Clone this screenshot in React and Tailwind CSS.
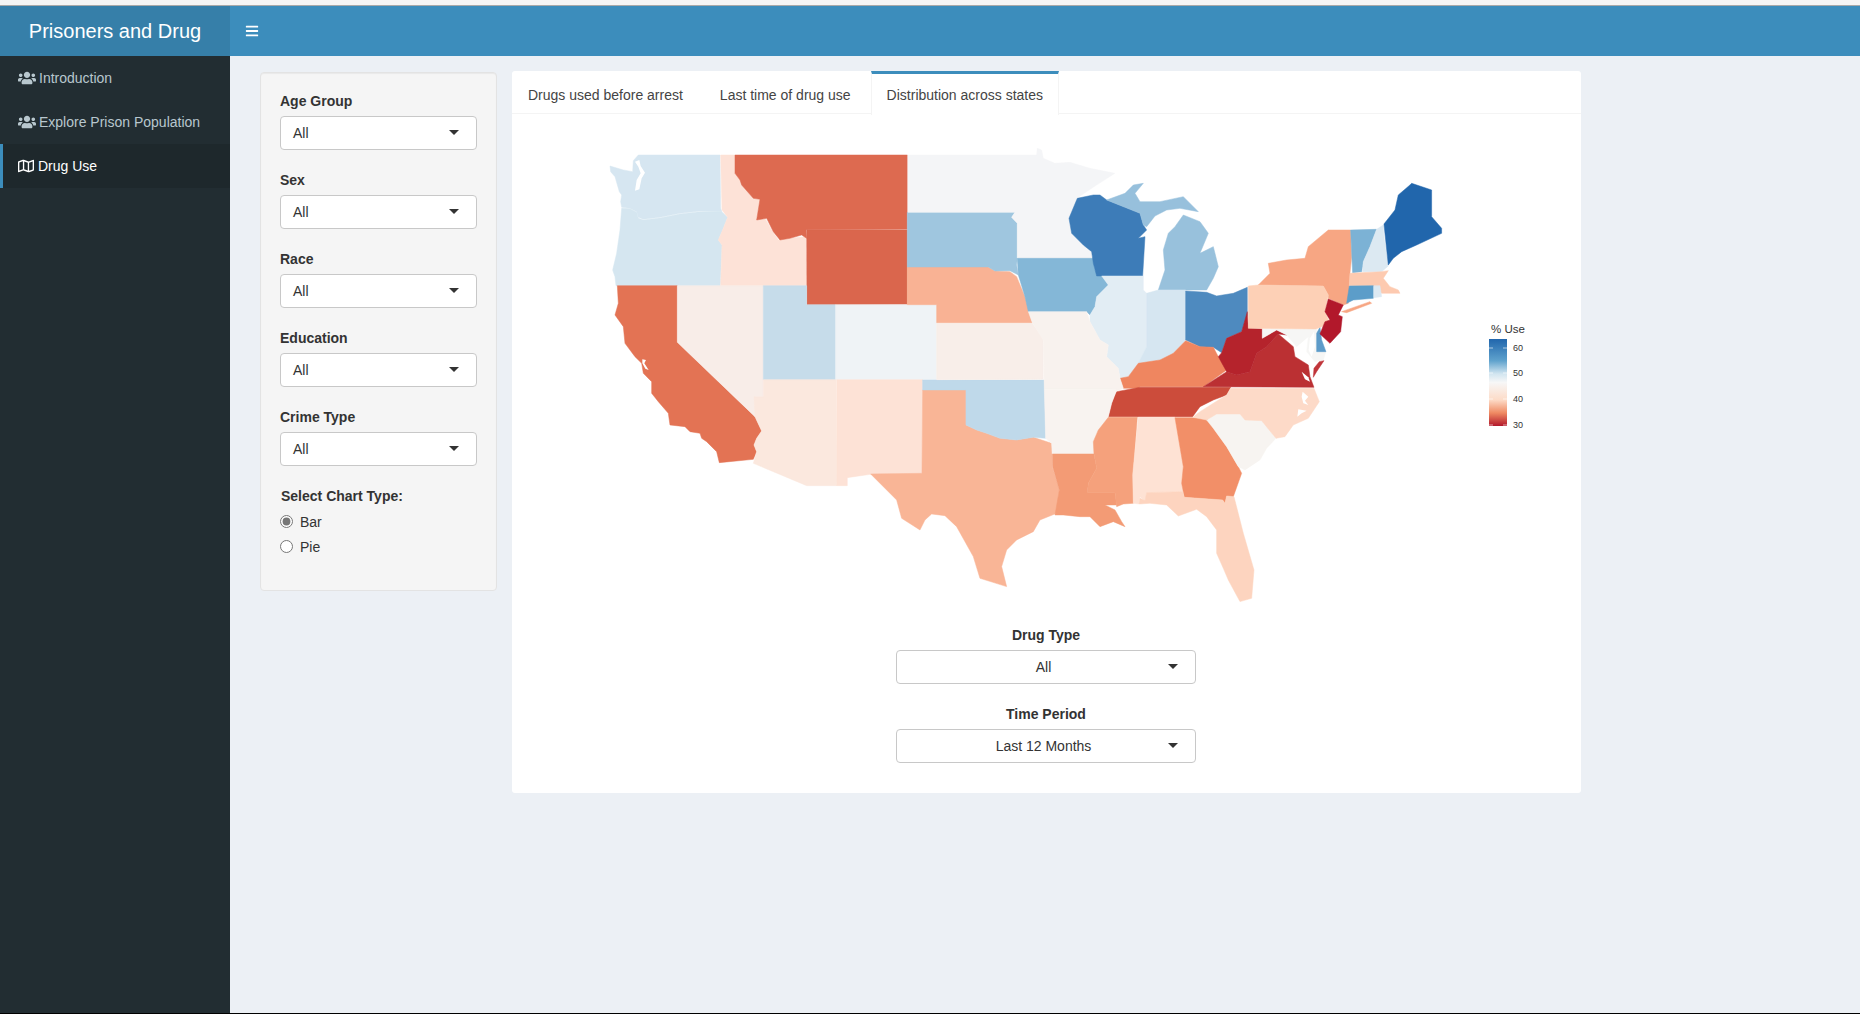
import React, { useState } from "react";
import { FaBars, FaRegMap, FaUsers } from "react-icons/fa";

const font = "font-['Liberation_Sans',Arial,sans-serif]";

// state outlines, in 3x pixels of the plot. west group starts at (590,130), east group at (1000,130)
const westStates = [
  ["#d6e6f1", "145,75 390,75 392,235 396,245 330,243 270,250 210,262 160,268 145,262 140,245 120,235 95,232 92,215 95,195 88,185 75,140 62,125 60,108 100,120 128,125 130,92"],
  ["#d5e6f0", "95,235 120,236 140,247 145,265 160,270 210,264 270,252 330,245 395,245 413,262 400,295 385,330 396,345 391,467 78,467 75,440 68,420 80,370 90,300"],
  ["#fde2d7", "392,75 435,75 435,130 450,150 455,165 490,205 510,208 500,265 525,265 545,300 565,330 600,325 630,322 648,320 650,467 392,467 396,345 385,330 400,295 413,262 396,240"],
  ["#dd6a50", "435,75 952,75 952,297 648,299 650,325 635,315 600,325 570,330 550,305 530,265 500,270 510,208 490,205 455,165 450,150 435,130"],
  ["#da664d", "650,299 952,299 952,523 651,524"],
  ["#e37354", "82,467 262,467 262,637 495,860 515,903 500,925 492,945 500,965 490,988 388,998 380,965 350,935 335,925 330,910 300,905 285,890 240,885 235,850 205,815 185,790 185,755 160,730 155,700 135,680 105,640 100,590 75,555 85,520"],
  ["#f8ede8", "262,467 520,467 520,800 495,800 495,860 262,637"],
  ["#c6dcea", "520,467 650,467 650,524 737,524 737,749 520,749"],
  ["#eff3f6", "737,524 1040,524 1040,749 737,749"],
  ["#fbe8de", "520,749 738,749 740,1067 650,1067 490,1000 500,965 492,945 500,925 515,903 495,860 492,800 520,800"],
  ["#fde2d6", "740,749 998,749 996,1030 842,1033 772,1043 772,1067 740,1067"],
  ["#f9b596", "998,780 1128,780 1128,885 1160,900 1190,910 1230,925 1280,930 1330,922 1385,940 1387,1010 1408,1080 1400,1150 1350,1170 1330,1205 1280,1230 1250,1260 1235,1310 1250,1370 1170,1345 1150,1280 1100,1190 1065,1157 1025,1152 1005,1170 990,1200 935,1165 920,1110 890,1080 842,1032 996,1030"],
  ["#bfd9ea", "998,750 1363,750 1367,925 1330,922 1280,930 1230,925 1190,910 1160,900 1128,885 1128,780 998,780"],
  ["#f8eee9", "1040,580 1327,580 1360,625 1360,748 1040,749"],
  ["#f9b294", "952,411 1195,411 1215,423 1260,425 1280,440 1305,500 1327,578 1040,578 1040,524 952,524"],
  ["#9fc6df", "952,247 1275,247 1265,262 1282,280 1282,385 1280,405 1285,435 1260,422 1215,423 1195,411 952,411"],
  ["#f4f5f7", "954,75 1340,75 1342,55 1355,60 1360,85 1395,100 1440,97 1500,115 1575,130 1520,165 1475,195 1462,205 1437,265 1445,310 1480,345 1505,365 1510,385 1282,385 1282,280 1265,262 1275,247 954,247"],
];

const eastStates = [
  ["#84b7d7", "52,385 280,385 285,420 305,435 325,465 290,500 285,530 270,555 260,545 85,545 75,500 55,435"],
  ["#3d7cb8", "232,205 280,195 300,195 320,210 420,250 430,285 440,300 415,325 435,320 428,438 290,438 280,400 275,365 250,345 215,310 207,265"],
  ["#97c0dc", "320,210 375,190 400,165 430,160 405,190 420,215 480,215 550,200 595,245 540,235 500,240 465,258 440,290 430,285 420,250"],
  ["#98c1dc", "475,480 495,420 490,360 505,310 525,290 550,255 600,275 625,310 600,370 640,350 655,410 640,445 620,480"],
  ["#e2edf4", "290,500 325,465 305,438 430,438 430,480 440,490 440,650 415,700 385,740 360,745 355,715 320,680 325,645 300,630 270,575 270,555 285,530"],
  ["#d6e6f1", "440,490 475,480 557,480 557,630 520,670 480,690 415,700 440,650"],
  ["#4e8abf", "557,483 620,487 650,498 700,490 742,472 742,555 725,605 680,625 665,668 640,652 600,650 557,630"],
  ["#ef8660", "360,745 385,740 415,700 480,690 520,670 557,632 600,650 640,652 655,680 680,720 610,770 420,770 415,775 370,775"],
  ["#cc4c3b", "350,785 420,772 692,772 680,795 640,810 600,830 578,860 325,860 335,820"],
  ["#f8f2ee", "85,545 260,545 270,575 300,630 325,645 320,680 355,715 360,745 370,775 345,785 335,778 133,778 130,630 97,578"],
  ["#f8f3f0", "133,778 350,778 335,820 325,860 300,890 285,920 282,972 157,972 155,940 137,925"],
  ["#f39b75", "157,972 282,972 290,1015 265,1060 262,1087 345,1087 350,1125 315,1125 345,1140 365,1175 375,1190 340,1175 300,1190 270,1160 240,1160 190,1155 165,1155 178,1080 158,1010"],
  ["#f5a17c", "325,862 412,862 400,1020 400,1120 370,1122 350,1130 345,1087 262,1087 265,1060 290,1015 282,972 280,935 295,900"],
  ["#fee2d4", "415,862 525,862 550,1010 545,1060 548,1085 440,1088 435,1115 420,1100 418,1122 400,1120 398,1035"],
  ["#f28f68", "525,863 620,863 640,895 680,950 715,1010 725,1030 700,1100 680,1098 675,1120 668,1110 553,1102 545,1060 550,1010"],
  ["#fdd4bf", "440,1088 548,1085 553,1102 668,1110 675,1120 680,1098 702,1100 730,1210 762,1320 755,1405 720,1415 685,1350 670,1315 650,1270 650,1200 620,1160 590,1138 535,1158 500,1125 450,1120 418,1122 420,1105 435,1112"],
  ["#f7f4f1", "620,870 650,852 720,852 735,870 785,872 828,925 800,955 780,990 735,1020 715,1010 680,950 640,895"],
  ["#fddac8", "692,775 942,775 958,815 925,865 880,885 855,920 828,925 785,872 735,870 720,852 650,852 620,870 578,862 600,845 640,820 680,795"],
  ["#bb3033", "610,770 680,725 710,735 750,725 770,670 800,650 835,612 880,650 885,680 925,705 930,740 942,772"],
  ["#b5232c", "665,668 680,625 725,605 742,545 745,595 787,597 787,625 830,600 860,615 835,612 800,650 770,670 750,725 710,735 680,725 655,680"],
  ["#f6f6f5", "787,597 950,597 950,665 978,665 970,690 945,695 920,665 925,620 890,650 860,615 830,600 787,625"],
  ["#5d9bc9", "960,592 950,610 950,665 978,665 965,630"],
  ["#c0353a", "958,695 972,692 950,725 940,742 942,715"],
  ["#f7a683", "775,465 810,430 805,400 860,390 915,385 925,350 985,300 1052,300 1055,380 1050,430 1045,520 1030,525 985,505 985,495 970,468"],
  ["#f7a683", "1025,545 1110,515 1115,520 1040,548"],
  ["#fdd0b6", "745,468 775,465 970,468 985,495 975,545 990,580 948,597 745,595"],
  ["#b2182b", "985,507 1030,525 1015,555 1027,560 1022,605 990,640 960,612 975,575 990,570 975,545"],
  ["#7cb2d5", "1052,300 1130,298 1110,350 1090,395 1085,425 1058,428"],
  ["#dce9f2", "1130,298 1150,285 1152,320 1165,408 1145,425 1088,425 1090,395 1110,350"],
  ["#2166ac", "1152,282 1185,240 1195,195 1230,165 1235,160 1295,180 1295,260 1325,295 1325,310 1250,345 1205,365 1180,385 1165,405"],
  ["#fdcab0", "1050,430 1145,425 1165,422 1150,445 1170,470 1195,480 1200,490 1170,490 1145,490 1120,467 1048,467"],
  ["#5c9dc9", "1048,468 1120,467 1120,505 1060,510 1040,520"],
  ["#dce9f2", "1122,467 1140,467 1145,500 1122,503"],
];

// bays and sounds cut out of the land
const westWater = [
  "135,95 148,90 152,108 165,128 155,145 148,178 135,182 140,150 152,130 145,110",
  "157,688 168,690 163,700 176,720 166,716 157,700",
];
const eastWater = [
  "908,785 925,800 915,812 925,825 910,820 905,800",
  "895,838 920,842 905,850 892,860",
  "905,725 925,742 930,755 915,748",
  "930,625 942,605 945,650 935,680 926,660",
];

function StateGroup({ x, states, water }) {
  return (
    <g transform={`translate(${x} 130) scale(0.3333)`}>
      {states.map(([fill, points], i) => (
        <polygon key={i} points={points} fill={fill} stroke={fill} strokeWidth="1.5" strokeLinejoin="round" />
      ))}
      {water.map((points, i) => (
        <polygon key={i} points={points} fill="#ffffff" />
      ))}
    </g>
  );
}

function UsMap() {
  return (
    <svg viewBox="512 114 1069 511" className="block h-[511px] w-[1069px]">
      <defs>
        <linearGradient id="useScale" x1="0" y1="0" x2="0" y2="1">
          <stop offset="0" stopColor="#2166ac" />
          <stop offset="0.25" stopColor="#5fa2cd" />
          <stop offset="0.4" stopColor="#d1e5f0" />
          <stop offset="0.5" stopColor="#f7f7f7" />
          <stop offset="0.7" stopColor="#fddbc7" />
          <stop offset="0.85" stopColor="#ef8a62" />
          <stop offset="1" stopColor="#b2182b" />
        </linearGradient>
      </defs>
      <StateGroup x={590} states={westStates} water={westWater} />
      <StateGroup x={1000} states={eastStates} water={eastWater} />

      <text x="1491" y="333" fontSize="11.5" fill="#333333">% Use</text>
      <rect x="1489" y="339" width="18" height="87" fill="url(#useScale)" />
      {[
        [348, "60"],
        [373, "50"],
        [399, "40"],
        [425, "30"],
      ].map(([y, label]) => (
        <g key={label}>
          <path d={`M1489 ${y}h4M1503 ${y}h4`} stroke="#ffffff" strokeOpacity="0.6" />
          <text x="1513" y={y + 3} fontSize="9" fill="#333333">{label}</text>
        </g>
      ))}
    </svg>
  );
}

function Dropdown({ label, value, centered }) {
  return (
    <div className={centered ? "mb-5 w-[300px]" : "mb-5"}>
      <p className={`mb-[5px] h-5 text-sm leading-5 font-bold text-[#333] ${centered ? "text-center" : ""}`}>{label}</p>
      <div className="flex h-[34px] items-center rounded border border-[#c8c8c8] bg-white pr-[17px] pl-3 text-sm text-[#333]">
        <span className={`flex-1 ${centered ? "pl-[10px] text-center" : ""}`}>{value}</span>
        <span className="mb-[2px] h-0 w-0 border-x-[5px] border-t-[5px] border-x-transparent border-t-[#333]"></span>
      </div>
    </div>
  );
}

function NavItem({ icon, label, active }) {
  return (
    <div
      className={
        active
          ? "flex h-11 items-center gap-1 border-l-[3px] border-[#3c8dbc] bg-[#1e282c] pl-[15px] text-sm text-white"
          : "flex h-11 items-center gap-[3px] pl-[18px] text-sm text-[#b8c7ce]"
      }
    >
      {icon}
      {label}
    </div>
  );
}

const tabs = ["Drugs used before arrest", "Last time of drug use", "Distribution across states"];

export default function App() {
  const [tab, setTab] = useState(2);

  return (
    <div className={`${font} flex h-screen flex-col overflow-hidden border-b border-black bg-[#ecf0f5]`}>
      <div className="h-[6px] shrink-0 border-b border-[#a9a9a9] bg-[#f5f5f5]"></div>

      <header className="flex h-[50px] shrink-0 bg-[#3c8dbc] text-white">
        <div className="flex w-[230px] items-center justify-center bg-[#367fa9] text-xl">Prisoners and Drug</div>
        <button className="flex w-[43px] items-center justify-center">
          <FaBars size={14} />
        </button>
      </header>

      <div className="flex min-h-0 flex-1">
        <aside className="w-[230px] shrink-0 bg-[#222d32]">
          <NavItem icon={<FaUsers size={18} />} label="Introduction" />
          <NavItem icon={<FaUsers size={18} />} label="Explore Prison Population" />
          <NavItem active icon={<FaRegMap size={16} />} label="Drug Use" />
        </aside>

        <main className="flex flex-1 items-start gap-[15px] pt-[15px] pl-[30px]">
          <div className="mt-px h-[519px] w-[237px] shrink-0 rounded border border-[#e3e3e3] bg-[#f5f5f5] px-[19px] pt-[18px] shadow-[inset_0_1px_1px_rgba(0,0,0,0.05)]">
            <Dropdown label="Age Group" value="All" />
            <Dropdown label="Sex" value="All" />
            <Dropdown label="Race" value="All" />
            <Dropdown label="Education" value="All" />
            <Dropdown label="Crime Type" value="All" />
            <p className="mb-[3px] ml-px h-5 text-sm leading-5 font-bold text-[#333]">Select Chart Type:</p>
            <label className="flex h-[25px] items-center gap-[7px] text-sm text-[#333]">
              <input type="radio" name="chart" defaultChecked className="m-0 h-[13px] w-[13px] accent-[#767676]" />
              Bar
            </label>
            <label className="flex h-[25px] items-center gap-[7px] text-sm text-[#333]">
              <input type="radio" name="chart" className="m-0 h-[13px] w-[13px] accent-[#767676]" />
              Pie
            </label>
          </div>

          <section className="w-[1069px] shrink-0 rounded-[3px] bg-white">
            <div className="flex h-[43px] gap-[5px] border-b border-[#f4f4f4] pl-px">
              {tabs.map((name, i) => (
                <button
                  key={name}
                  onClick={() => setTab(i)}
                  className={
                    tab === i
                      ? "-mb-px h-[44px] border-x border-t-[3px] border-x-[#f4f4f4] border-t-[#3c8dbc] bg-white px-[15px] text-sm text-[#444] first:mr-[2px]"
                      : "h-[43px] px-[15px] pt-1 text-sm text-[#444] first:mr-[2px]"
                  }
                >
                  {name}
                </button>
              ))}
            </div>
            <UsMap />
            <div className="flex flex-col items-center pr-px pb-[10px]">
              <Dropdown centered label="Drug Type" value="All" />
              <Dropdown centered label="Time Period" value="Last 12 Months" />
            </div>
          </section>
        </main>
      </div>
    </div>
  );
}
